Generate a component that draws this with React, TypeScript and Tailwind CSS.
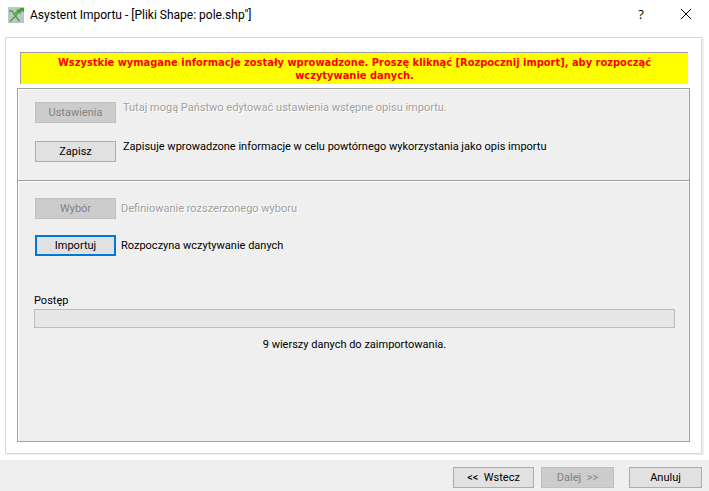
import type { ButtonHTMLAttributes, ReactNode } from "react";
import clsx from "clsx";

interface DialogButtonProps extends ButtonHTMLAttributes<HTMLButtonElement> {
  focused?: boolean;
}

function DialogButton({ focused, className, ...props }: DialogButtonProps) {
  return (
    <button
      type="button"
      className={clsx(
        "h-[21px] shrink-0 whitespace-pre bg-[#e1e1e1] pt-px leading-4 disabled:bg-[#cccccc] disabled:text-[#838383]",
        focused ? "border-2 border-[#0078d7]" : "border border-[#adadad] disabled:border-[#bfbfbf]",
        className
      )}
      {...props}
    />
  );
}

interface ActionRowProps {
  label: string;
  disabled?: boolean;
  focused?: boolean;
  className: string;
  children: ReactNode;
}

function ActionRow({ label, disabled, focused, className, children }: ActionRowProps) {
  return (
    <div className={clsx("flex", className)}>
      <DialogButton className="w-[81px]" disabled={disabled} focused={focused}>
        {label}
      </DialogButton>
      <p className={disabled ? "text-[#a0a0a0] [text-shadow:1px_1px_white]" : "text-black"}>
        {children}
      </p>
    </div>
  );
}

function AppIcon() {
  return (
    <svg viewBox="0 0 16 16" className="size-4 bg-[#bdc5cb]" fill="none" aria-hidden="true">
      <path d="M1 4h3L11.5 14.5M2 14.5 6.5 10 12.5 3" stroke="#48a63a" strokeWidth="1.4" />
      <path d="M5.5 7.5 10 4" stroke="#48a63a" strokeWidth="1.2" />
      <path d="M8 2.5h4.5V7L11 5.5 9.5 6.5V4zM11.5 1H16v4.5L14.5 4 13 5z" fill="#3fa331" />
    </svg>
  );
}

export default function App() {
  return (
    <div className="flex min-h-screen flex-col bg-white font-['Tahoma','Roboto',sans-serif] text-[11px] leading-4 text-black">
      {/* Title bar */}
      <header className="flex h-[37px] items-start pt-[6px] pl-2 pr-[18px]">
        <div className="flex flex-1 items-center gap-[6px]">
          <AppIcon />
          <h1 className="font-['Segoe_UI','Roboto',sans-serif] text-[12px] leading-[18px]">
            Asystent Importu - [Pliki Shape: pole.shp"]
          </h1>
        </div>
        <div className="flex items-center gap-8">
          <button type="button" aria-label="Pomoc" className="w-4 font-['Segoe_UI','Open_Sans',sans-serif] text-[13px] leading-4">
            ?
          </button>
          <button type="button" aria-label="Zamknij" className="py-[3px]">
            <svg viewBox="0 0 10 10" className="size-[10px]" stroke="black" aria-hidden="true">
              <path d="M0 0 10 10M10 0 0 10" />
            </svg>
          </button>
        </div>
      </header>

      {/* Wizard page */}
      <main className="mr-[7px] ml-[5px] flex flex-1 flex-col border border-[#d9d9d9] px-[11px] pt-[14px] pb-[11px] shadow-[2px_1px_0_#efefef]">
        <p
          role="status"
          className="mr-[2px] ml-[3px] border-t border-l border-[#a0a0a0] bg-[#ffff00] px-4 pt-[3px] pb-[2px] text-center font-['Tahoma','DejaVu_Sans_Condensed',sans-serif] font-bold leading-[13px] text-[#ff0000]"
        >
          Wszystkie wymagane informacje zostały wprowadzone. Proszę kliknąć [Rozpocznij import], aby rozpocząć wczytywanie danych.
        </p>

        <div className="mt-1 flex flex-1 flex-col border border-[#a0a0a0] bg-[#efefef] shadow-[inset_1px_1px_white]">
          <section className="flex flex-col gap-[18px] border-b border-[#a0a0a0] px-[17px] pt-[13px] pb-[18px]">
            <ActionRow label="Ustawienia" disabled className="items-start gap-[7px] leading-3">
              Tutaj mogą Państwo edytować ustawienia wstępne opisu importu.
            </ActionRow>
            <ActionRow label="Zapisz" className="items-start gap-[7px] leading-3">
              Zapisuje wprowadzone informacje w celu powtórnego wykorzystania jako opis importu
            </ActionRow>
          </section>

          <section className="flex flex-col gap-4 px-[17px] pt-[17px] shadow-[inset_1px_1px_white]">
            <ActionRow label="Wybór" disabled className="items-center gap-[5px]">
              Definiowanie rozszerzonego wyboru
            </ActionRow>
            <ActionRow label="Importuj" focused className="items-center gap-[5px]">
              Rozpoczyna wczytywanie danych
            </ActionRow>
          </section>

          <section className="mt-[37px] pr-[14px] pl-4">
            <span id="progress-label">Postęp</span>
            <div
              role="progressbar"
              aria-labelledby="progress-label"
              aria-valuenow={0}
              className="h-[19px] border border-[#bcbcbc] bg-[#e6e6e6]"
            />
            <p className="mt-[9px] text-center">9 wierszy danych do zaimportowania.</p>
          </section>
        </div>
      </main>

      {/* Navigation */}
      <footer className="mt-[6px] flex h-[31px] justify-end bg-[#efefef] pt-[7px] pr-[7px]">
        <DialogButton className="w-[81px]">{"<<  Wstecz"}</DialogButton>
        <DialogButton className="ml-[7px] w-[73px]" disabled>
          {"Dalej  >>"}
        </DialogButton>
        <DialogButton className="ml-[15px] w-[73px]">Anuluj</DialogButton>
      </footer>
    </div>
  );
}
